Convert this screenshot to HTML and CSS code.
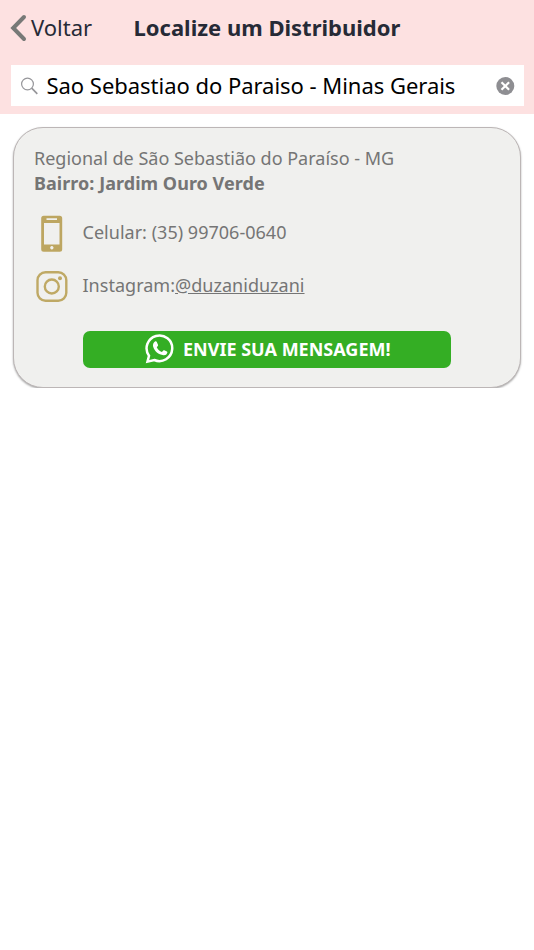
FILE: index.html
```html
<!DOCTYPE html>
<html lang="pt-BR">
<head>
<meta charset="utf-8">
<title>Localize um Distribuidor</title>
<link rel="stylesheet" href="styles.css">
</head>
<body>
<header class="topo">
	<div class="barra">
		<a href="#" class="voltar">
			<svg width="18" height="28" viewBox="0 0 18 28"><path d="M14 3L3.200 14L14 25" fill="none" stroke="#777977" stroke-width="4" stroke-linecap="round"/></svg>
			<span>Voltar</span>
		</a>
		<h1>Localize um Distribuidor</h1>
	</div>
	<div class="busca">
		<svg width="18" height="18" viewBox="0 0 18 18" fill="none" stroke="#96969a" stroke-width="1.200"><circle cx="6.500" cy="7" r="5.900"/><path d="M10.700 11.200L16.300 16.800" stroke-width="1.700"/></svg>
		<span class="texto">Sao Sebastiao do Paraiso - Minas Gerais</span>
		<svg width="19" height="18" viewBox="0 0 19 18"><circle cx="9.300" cy="9" r="9" fill="#8e8e92"/><path d="M5.500 5.200l7.600 7.600M13.100 5.200l-7.600 7.600" stroke="#fff" stroke-width="2.200"/></svg>
	</div>
</header>
<main class="cartao">
	<p class="regional">Regional de São Sebastião do Paraíso - MG</p>
	<p class="bairro">Bairro: Jardim Ouro Verde</p>
	<div class="contato celular">
		<svg width="36" height="38" viewBox="0 0 36 38"><path fill="#bda661" fill-rule="evenodd" d="M9.700 1.800h16a2.500 2.500 0 0 1 2.500 2.500v31a2.500 2.500 0 0 1-2.500 2.500h-16a2.500 2.500 0 0 1-2.500-2.500v-31a2.500 2.500 0 0 1 2.500-2.500zM10 9v21.500h15.500V9zM12.500 4.300v1.600h10.500V4.300zM17.800 32a1.700 1.700 0 1 0 .1 0z"/></svg>
		<span>Celular: (35) 99706-0640</span>
	</div>
	<div class="contato instagram">
		<svg width="36" height="34" viewBox="0 0 36 34" fill="none" stroke="#bfa965" stroke-width="2.400"><rect x="3.500" y="3.300" width="28.800" height="28.400" rx="8"/><circle cx="17.800" cy="17.500" r="7"/><circle cx="26" cy="9.300" r="2" fill="#bfa965" stroke="none"/></svg>
		<span>Instagram:<a href="#">@duzaniduzani</a></span>
	</div>
	<a href="#" class="enviar">
		<svg width="30" height="31" viewBox="0 0 30 31"><path fill="none" stroke="#fff" stroke-width="2.500" d="M2.500 27.600L4 21.700A12.800 12.800 0 1 1 9.300 26z"/><path fill="#fff" d="M10.300 7.300c.7-.2 1.200 0 1.500.7l1.200 2.800c.2.500.1.800-.2 1.200l-1 1.300c1.200 2.400 2.800 3.900 5.100 4.800l1.400-1.600c.3-.3.600-.4 1-.2l2.600 1.300c.5.300.6.600.4 1.200-.5 1.800-2 2.700-3.800 2.500-5.200-.6-9-4-10.400-8.700-.5-2.300.4-4.400 2.200-5.300z"/></svg>
		<span>ENVIE SUA MENSAGEM!</span>
	</a>
</main>
</body>
</html>
```
FILE: styles.css
```css
* {margin:0; padding:0; box-sizing:border-box;}
body{background:#fff; font-family:"Noto Sans",sans-serif; color:#757575;}
a{color:inherit;}
svg{display:block; flex:none;}

.topo{height:114px; background:#fde1e1;}
.barra{height:65px; padding:0 0 9px 10px; display:flex; align-items:center; color:#262a36;}
.voltar{display:flex; align-items:center; gap:3px; width:123.500px; font-size:22px; text-decoration:none;}
.voltar span,.barra h1{padding-bottom:2px;}
.barra h1{font-size:22px; font-weight:bold; white-space:nowrap;}

.busca{height:41px; margin:0 10.500px; padding:0 9px 0 10px; background:#fff; display:flex; align-items:center;}
.busca .texto{flex:1; margin-left:8px; padding-bottom:1px; font-size:22px; letter-spacing:-.03px; color:#000; white-space:nowrap;}

.cartao{height:261px; margin:13px 13px 0; padding:18px 20px; background:#f0f0ee; border:1px solid #bcb6b6; border-radius:30px; box-shadow:0 1px 2px rgba(0,0,0,.35); font-size:18px; line-height:25px;}
.bairro{font-weight:bold; letter-spacing:.04px;}
.contato{display:flex; align-items:center; gap:12.500px;}
.contato span{padding-bottom:2px; letter-spacing:.02px;}
.celular{margin-top:18px;}
.instagram{margin-top:17px;}
.enviar{width:368.500px; height:37px; margin:28px 0 0 48.500px; padding-left:2px; background:#34ae24; border-radius:7px; color:#fff; font-weight:bold; text-decoration:none; display:flex; align-items:center; justify-content:center; gap:8px;}
```
